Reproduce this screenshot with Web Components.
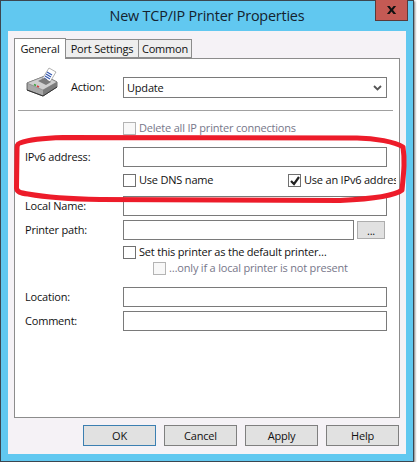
<!DOCTYPE html>
<html>
<head>
<meta charset="utf-8">
<title>New TCP/IP Printer Properties</title>
<style>
    body { margin: 0; background: #fff; font: 11px "Open Sans", sans-serif; letter-spacing: -.2px; color: #111; }
</style>
</head>
<body>
<printer-dialog heading="New TCP/IP Printer Properties">
    <dialog-tabs slot="tabs"></dialog-tabs>

    <form-row style="margin-top:7px;align-items:flex-end" label="Action:" indent="52">
        <printer-icon slot="before"></printer-icon>
        <combo-box value="Update"></combo-box>
    </form-row>
    <div style="height:1px;background:#a0a0a0;margin:12px 6px 0 3px"></div>
    <form-row style="margin-top:11px"><check-box disabled>Delete all IP printer connections</check-box></form-row>
    <form-row style="margin-top:12px" label="IPv6 address:"><text-input></text-input></form-row>
    <form-row style="margin-top:7px">
        <check-box style="width:165px">Use DNS name</check-box>
        <check-box checked style="width:108px;overflow:hidden">Use an IPv6 address</check-box>
    </form-row>
    <form-row style="margin-top:9px" label="Local Name:"><text-input></text-input></form-row>
    <form-row style="margin-top:4px" label="Printer path:">
        <text-input style="width:231px"></text-input>
        <dialog-button small style="margin-left:3px">...</dialog-button>
    </form-row>
    <form-row style="margin-top:6px"><check-box>Set this printer as the default printer…</check-box></form-row>
    <form-row style="margin-top:3px"><check-box disabled style="margin-left:30px">…only if a local printer is not present</check-box></form-row>
    <form-row style="margin-top:12px" label="Location:"><text-input></text-input></form-row>
    <form-row style="margin-top:4px" label="Comment:"><text-input></text-input></form-row>

    <dialog-button slot="actions" focused>OK</dialog-button>
    <dialog-button slot="actions">Cancel</dialog-button>
    <dialog-button slot="actions">Apply</dialog-button>
    <dialog-button slot="actions">Help</dialog-button>
</printer-dialog>

<script>
class PrinterDialog extends HTMLElement {
    constructor() {
        super();
        const shadowRoot = this.attachShadow({ mode: 'open' });
        shadowRoot.innerHTML = `
            <style>
                :host { display: block; position: relative; width: 414px; height: 462px; box-sizing: border-box; border: 1px solid #3c4650; background: #61c8f0; box-shadow: 1px 1px 2px #777; }
                .title { height: 29px; padding-bottom: 1px; display: flex; align-items: center; justify-content: center; font-size: 14.4px; color: #14222e; }
                .close { position: absolute; top: -1px; right: 5px; width: 33px; height: 21px; box-sizing: border-box; border: 1px solid #5a3a3a; border-top: 0; background: #c45a54; }
                .close svg { display: block; margin: 5px auto 0; }
                .body { height: 423px; margin: 0 7px; box-sizing: border-box; background: #f5f2f6; padding: 7px 6px 0; display: flex; flex-direction: column; }
                .panel { height: 360px; box-sizing: border-box; border: 1px solid #8c8c8c; background: #fff; margin-top: -1px; }
                .actions { display: flex; justify-content: flex-end; gap: 8px; margin-top: 7px; padding-right: 1px; }
            </style>
            <div class="title" id="title"></div>
            <div class="close"><svg width="11" height="10" viewBox="0 0 11 10"><path d="M1 1h2.6l2 2.4 2-2.4h2.5L7 5l3.200 4H7.500L5.500 6.600 3.500 9H.900L4.100 5z" fill="#111"/></svg></div>
            <div class="body">
                <slot name="tabs"></slot>
                <div class="panel"><slot></slot></div>
                <div class="actions"><slot name="actions"></slot></div>
            </div>
            <svg style="position:absolute;left:-1px;top:-1px;pointer-events:none" width="417" height="465" viewBox="0 0 417 465" fill="none">
                <path d="M63 137.500C45 138 28 140 20 143C17 144 17 146 17 150L16.500 188C17 192 20 193 28 194C50 198 70 199 100 199.500L340 200.500C370 199 395 196 402 190C404 170 405 160 403 147C395 142 375 138 357 138L63 137.500Z" stroke="#ed1c2a" stroke-width="5" stroke-linejoin="round"/>
            </svg>
        `;
        shadowRoot.querySelector('#title').textContent = this.getAttribute('heading');
    }
}

class DialogTabs extends HTMLElement {
    constructor() {
        super();
        const shadowRoot = this.attachShadow({ mode: 'open' });
        shadowRoot.innerHTML = `
            <style>
                :host { display: flex; align-items: flex-end; height: 21px; position: relative; z-index: 1; font-size: 11px; }
                span { box-sizing: border-box; height: 19px; border: 1px solid #8c8c8c; border-left: 0; background: #eeeeee; display: flex; align-items: center; justify-content: center; margin-bottom: 1px; }
                .on { height: 21px; width: 52px; border-left: 1px solid #8c8c8c; border-bottom: 0; background: #fff; margin-bottom: 0; padding-bottom: 2px; }
            </style>
            <span class="on">General</span>
            <span style="width:73px">Port Settings</span>
            <span style="width:53px">Common</span>
        `;
    }
}

class PrinterIcon extends HTMLElement {
    constructor() {
        super();
        const shadowRoot = this.attachShadow({ mode: 'open' });
        shadowRoot.innerHTML = `
            <style>:host { display: block; width: 32px; height: 32px; } svg { display: block; }</style>
            <svg width="32" height="32" viewBox="0 0 32 32">
                <path d="M1 17L19 10L31 16V21L17 30L1 24Z" fill="#a8a8a8" stroke="#4a4a4a" stroke-width=".8"/>
                <path d="M1 17L17 24L31 16L19 10Z" fill="#cfcfcf" stroke="#808080" stroke-width=".6"/>
                <path d="M17 24V30L31 21V16Z" fill="#7c7c7c"/>
                <path d="M1 24L17 30L31 21" stroke="#333" fill="none"/>
                <path d="M16 13L23 2L30 6L24 16Z" fill="#fff" stroke="#808080" stroke-width=".6"/>
                <path d="M21 6l5 3M20 8l5 3M19 10l5 3M18 12l3 2" stroke="#3458b0" stroke-width="1.200"/>
                <path d="M12 15l6-3 7 4-5 3z" fill="#7a7a7a"/>
                <path d="M8 18.500l2 1" stroke="#3ca03c" stroke-width="1.500"/>
                <path d="M11 20l2 1" stroke="#d04040" stroke-width="1.500"/>
            </svg>
        `;
    }
}

class FormRow extends HTMLElement {
    constructor() {
        super();
        const shadowRoot = this.attachShadow({ mode: 'open' });
        shadowRoot.innerHTML = `
            <style>
                :host { display: flex; align-items: center; padding-left: 11px; }
                label { width: 98px; margin-left: -1px; padding-bottom: 2px; flex: none; align-self: center; }
                .controls { flex: 1; display: flex; align-items: center; min-width: 0; }
                ::slotted([slot=before]) { flex: none; margin-right: 14px; }
            </style>
            <slot name="before"></slot>
            <label id="label"></label>
            <div class="controls"><slot></slot></div>
        `;
        shadowRoot.querySelector('#label').textContent = this.getAttribute('label') || '';
        if (this.hasAttribute('indent')) {
            const label = shadowRoot.querySelector('#label');
            label.style.width = this.getAttribute('indent') + 'px';
            label.style.alignSelf = 'flex-end';
            label.style.paddingBottom = '4px';
        }
    }
}

class TextInput extends HTMLElement {
    constructor() {
        super();
        const shadowRoot = this.attachShadow({ mode: 'open' });
        shadowRoot.innerHTML = `
            <style>
                :host { display: block; width: 264px; height: 20px; box-sizing: border-box; border: 1px solid #7a7a7a; background: #fff; flex: none; }
            </style>
        `;
    }
}

class ComboBox extends HTMLElement {
    constructor() {
        super();
        const shadowRoot = this.attachShadow({ mode: 'open' });
        shadowRoot.innerHTML = `
            <style>
                :host { display: flex; align-items: center; justify-content: space-between; width: 264px; height: 21px; box-sizing: border-box; border: 1px solid #7a7a7a; padding: 0 4px 0 3px; background: #fff; flex: none; }
                svg { display: block; }
                span { margin-top: -1px; }
            </style>
            <span id="value"></span>
            <svg width="9" height="6" viewBox="0 0 9 6"><path d="M1 1l3.500 3.500L8 1" fill="none" stroke="#555" stroke-width="1.800"/></svg>
        `;
        shadowRoot.querySelector('#value').textContent = this.getAttribute('value');
    }
}

class CheckBox extends HTMLElement {
    constructor() {
        super();
        const shadowRoot = this.attachShadow({ mode: 'open' });
        shadowRoot.innerHTML = `
            <style>
                :host { display: flex; align-items: center; gap: 3px; white-space: nowrap; flex: none; line-height: 13px; }
                :host([disabled]) { color: #77778a; }
                .box { width: 13px; height: 13px; box-sizing: border-box; border: 1px solid #707070; background: #fff; flex: none; position: relative; }
                :host([disabled]) .box { border-color: #b4b4b4; background: #f8f8f8; }
                svg { position: absolute; left: 1px; top: 1px; display: none; }
                :host([checked]) svg { display: block; }
                .text { margin-top: -2px; }
            </style>
            <span class="box"><svg width="10" height="10" viewBox="0 0 10 10"><path d="M1 5l3 3 5-7" fill="none" stroke="#222" stroke-width="2.200"/></svg></span>
            <span class="text"><slot></slot></span>
        `;
    }
}

class DialogButton extends HTMLElement {
    constructor() {
        super();
        const shadowRoot = this.attachShadow({ mode: 'open' });
        shadowRoot.innerHTML = `
            <style>
                :host { display: flex; align-items: center; justify-content: center; width: 73px; height: 21px; box-sizing: border-box; border: 1px solid #7f7f7f; background: #e1e1e1; flex: none; }
                :host([focused]) { border-color: #3c7fb1; }
                :host([small]) { width: 28px; height: 18px; border-color: #adadad; }
            </style>
            <slot></slot>
        `;
    }
}

customElements.define('printer-dialog', PrinterDialog);
customElements.define('dialog-tabs', DialogTabs);
customElements.define('printer-icon', PrinterIcon);
customElements.define('form-row', FormRow);
customElements.define('text-input', TextInput);
customElements.define('combo-box', ComboBox);
customElements.define('check-box', CheckBox);
customElements.define('dialog-button', DialogButton);
</script>
</body>
</html>
